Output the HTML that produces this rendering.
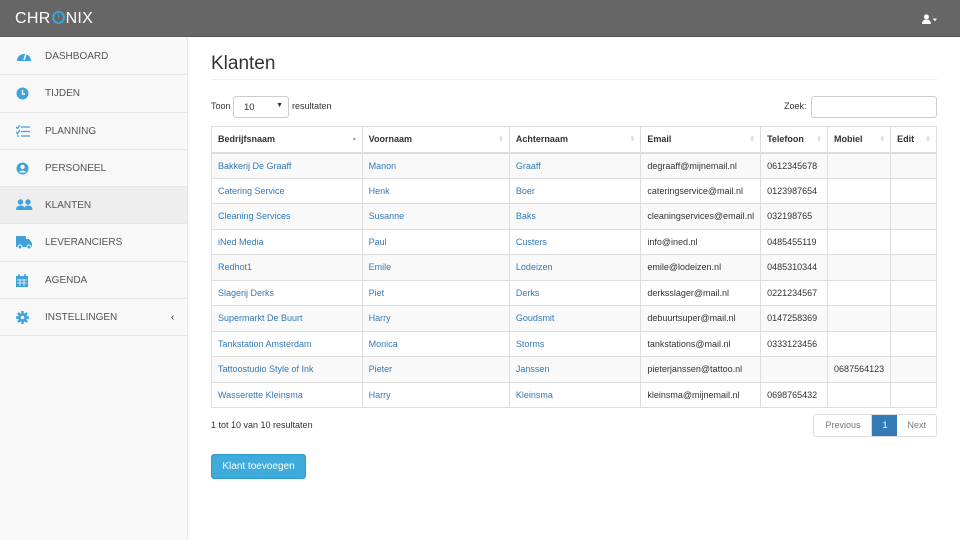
<!DOCTYPE html>
<html><head><meta charset="utf-8"><style>
*{box-sizing:border-box;margin:0;padding:0}
body{width:960px;height:540px;overflow:hidden;background:#fff;font-family:"Liberation Sans",Arial,sans-serif;color:#333;position:relative}
.top{position:absolute;left:0;top:0;width:960px;height:37px;background:#666;border-bottom:1px solid #555}
.logo{position:absolute;left:15px;top:10px;color:#fff;font-size:16px;letter-spacing:0.3px;line-height:18px}
.logo .o{display:inline-block;width:13px;height:13px;border:2.3px solid #3fa2d8;border-radius:50%;vertical-align:-1px;position:relative;margin:0 1px}
.logo .o:after{content:"";position:absolute;left:4px;top:1px;width:1.5px;height:4px;background:#3fa2d8}
.user{position:absolute;right:22px;top:12px}
.side{position:absolute;left:0;top:38px;width:188px;height:502px;background:#f8f8f8;border-right:1px solid #e7e7e7}
.item{height:37.3px;border-bottom:1px solid #e7e7e7;position:relative;font-size:10px;color:#555;line-height:38px;padding-left:45px}
.item.act{background:#eee}
.item svg{position:absolute;left:16px;top:12px}
.main{position:absolute;left:211px;top:0;width:726px}
h1{position:absolute;top:53px;font-size:19px;font-weight:normal;color:#333}
.hr{position:absolute;top:79px;left:0;width:726px;height:1px;background:#eee}
.f{position:absolute;font-size:9px;color:#333}
.sel{position:absolute;left:22px;top:96px;width:56px;height:22px;border:1px solid #ccc;border-radius:3px;font-size:9.5px;padding:5px 0 0 10px}
table{position:absolute;top:126px;left:0;width:726px;border-collapse:collapse;font-size:9px}
td,th{border:1px solid #ddd;padding:0 6px;height:25.5px;text-align:left;white-space:nowrap}
th{font-weight:bold;border-bottom:2px solid #ddd;position:relative;height:26px}
th:after{content:"⬍";position:absolute;right:5px;top:8px;font-size:7px;color:#ddd}
th.s:after{content:"▲";color:#999;font-size:5px;top:9px}
tr:nth-child(even) td{background:#f9f9f9}
td a{color:#337ab7;text-decoration:none}
.pg{position:absolute;top:414px;right:0;height:23px;display:flex;font-size:9px;border:1px solid #ddd;border-radius:3px}
.pg div{padding:0 10px;line-height:21px;color:#777}
.pg .p{padding:0 11px;border-right:1px solid #ddd}
.pg .c{background:#337ab7;color:#fff;padding:0 10px}
.btn{position:absolute;top:454px;left:0;width:95px;height:25px;background:#3fabdb;border:1px solid #2f9bcc;border-radius:3px;color:#fff;font-size:10px;text-align:center;line-height:23px}
</style></head><body>
<div class="top"><div class="logo">CHR<span class="o"></span>NIX</div>
<div class="user"><svg width="16" height="11" viewBox="0 0 18 12"><circle cx="5" cy="3" r="2.8" fill="#fff"/><path d="M0 11 Q0 6 5 6 Q10 6 10 11Z" fill="#fff"/><path d="M12 5h5l-2.5 3z" fill="#fff"/></svg></div></div>
<div class="side">
<div class="item"><svg width="16" height="12" viewBox="0 0 16 12"><path d="M1 11A7 7 0 1 1 15 11Z" fill="#3fa2d8"/><path d="M8 10L10 4" stroke="#f8f8f8" stroke-width="1.5"/></svg>DASHBOARD</div>
<div class="item"><svg width="13" height="13" viewBox="0 0 13 13"><circle cx="6.5" cy="6.5" r="6" fill="#3fa2d8"/><path d="M6.5 3v4h2.5" stroke="#fff" stroke-width="1.4" fill="none"/></svg>TIJDEN</div>
<div class="item"><svg width="14" height="12" viewBox="0 0 14 12"><path d="M0 2l1.5 1.5L4 0M0 7l1.5 1.5L4 5M1 11h2M5 2h9M5 6.5h9M5 11h9" stroke="#3fa2d8" stroke-width="1.3" fill="none"/></svg>PLANNING</div>
<div class="item"><svg width="13" height="13" viewBox="0 0 13 13"><circle cx="6.5" cy="6.5" r="6" fill="#3fa2d8"/><circle cx="6.5" cy="5" r="2.2" fill="#fff"/><path d="M2.8 10.5Q6.5 6.5 10.2 10.5" fill="#fff"/></svg>PERSONEEL</div>
<div class="item act"><svg width="17" height="12" viewBox="0 0 17 12"><circle cx="4.5" cy="3" r="2.7" fill="#3fa2d8"/><circle cx="12" cy="3" r="2.7" fill="#3fa2d8"/><path d="M0 11Q0 6.5 4.5 6.5Q9 6.5 9 11ZM8 11Q8 6.5 12 6.5Q16.5 6.5 16.5 11Z" fill="#3fa2d8"/></svg>KLANTEN</div>
<div class="item"><svg width="17" height="13" viewBox="0 0 17 13"><path d="M0 0h10v3h3l3 4v4H0Z" fill="#3fa2d8"/><circle cx="4" cy="11" r="2" fill="#3fa2d8" stroke="#f8f8f8"/><circle cx="13" cy="11" r="2" fill="#3fa2d8" stroke="#f8f8f8"/></svg>LEVERANCIERS</div>
<div class="item"><svg width="12" height="13" viewBox="0 0 12 13"><rect x="0" y="2" width="12" height="11" fill="#3fa2d8"/><path d="M3 0v3M9 0v3" stroke="#3fa2d8" stroke-width="1.5"/><path d="M1 6h10M1 9h10M4 5v7M8 5v7" stroke="#f8f8f8" stroke-width="0.8"/></svg>AGENDA</div>
<div class="item"><svg width="13" height="13" viewBox="0 0 13 13"><circle cx="6.5" cy="6.5" r="4.5" fill="#3fa2d8"/><path d="M6.5 0v13M0 6.5h13M2 2l9 9M11 2l-9 9" stroke="#3fa2d8" stroke-width="2.4"/><circle cx="6.5" cy="6.5" r="1.8" fill="#f8f8f8"/></svg>INSTELLINGEN<span style="position:absolute;left:171px;font-size:10px;color:#333">‹</span></div>
</div>
<div class="main">
<h1>Klanten</h1><div class="hr"></div>
<div class="f" style="left:0;top:101px">Toon</div>
<div class="sel">10<span style="position:absolute;right:5px;top:5px;font-size:7px">▼</span></div>
<div class="f" style="left:81px;top:101px">resultaten</div>
<div class="f" style="left:573px;top:101px">Zoek:</div>
<div style="position:absolute;left:600px;top:96px;width:126px;height:22px;border:1px solid #ccc;border-radius:3px"></div>
<table>
<colgroup><col style="width:151px"><col style="width:148px"><col style="width:132px"><col style="width:119px"><col style="width:67px"><col style="width:63px"><col style="width:46px"></colgroup>
<tr><th class="s">Bedrijfsnaam</th><th>Voornaam</th><th>Achternaam</th><th>Email</th><th>Telefoon</th><th>Mobiel</th><th>Edit</th></tr>
<tr><td><a>Bakkerij De Graaff</a></td><td><a>Manon</a></td><td><a>Graaff</a></td><td>degraaff@mijnemail.nl</td><td>0612345678</td><td></td><td></td></tr>
<tr><td><a>Catering Service</a></td><td><a>Henk</a></td><td><a>Boer</a></td><td>cateringservice@mail.nl</td><td>0123987654</td><td></td><td></td></tr>
<tr><td><a>Cleaning Services</a></td><td><a>Susanne</a></td><td><a>Baks</a></td><td>cleaningservices@email.nl</td><td>032198765</td><td></td><td></td></tr>
<tr><td><a>iNed Media</a></td><td><a>Paul</a></td><td><a>Custers</a></td><td>info@ined.nl</td><td>0485455119</td><td></td><td></td></tr>
<tr><td><a>Redhot1</a></td><td><a>Emile</a></td><td><a>Lodeizen</a></td><td>emile@lodeizen.nl</td><td>0485310344</td><td></td><td></td></tr>
<tr><td><a>Slagerij Derks</a></td><td><a>Piet</a></td><td><a>Derks</a></td><td>derksslager@mail.nl</td><td>0221234567</td><td></td><td></td></tr>
<tr><td><a>Supermarkt De Buurt</a></td><td><a>Harry</a></td><td><a>Goudsmit</a></td><td>debuurtsuper@mail.nl</td><td>0147258369</td><td></td><td></td></tr>
<tr><td><a>Tankstation Amsterdam</a></td><td><a>Monica</a></td><td><a>Storms</a></td><td>tankstations@mail.nl</td><td>0333123456</td><td></td><td></td></tr>
<tr><td><a>Tattoostudio Style of Ink</a></td><td><a>Pieter</a></td><td><a>Janssen</a></td><td>pieterjanssen@tattoo.nl</td><td></td><td>0687564123</td><td></td></tr>
<tr><td><a>Wasserette Kleinsma</a></td><td><a>Harry</a></td><td><a>Kleinsma</a></td><td>kleinsma@mijnemail.nl</td><td>0698765432</td><td></td><td></td></tr>
</table>
<div class="f" style="left:0;top:420px">1 tot 10 van 10 resultaten</div>
<div class="pg"><div class="p">Previous</div><div class="c">1</div><div>Next</div></div>
<div class="btn">Klant toevoegen</div>
</div>
</body></html>
